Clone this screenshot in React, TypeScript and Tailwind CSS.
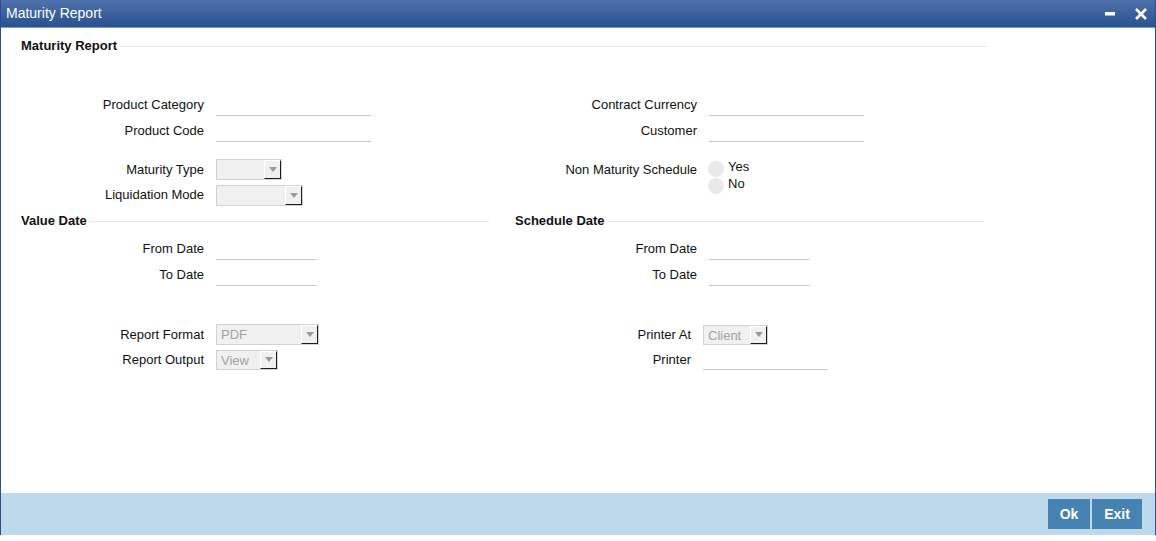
import React from "react";

const Label = ({ text, w = "w-[215px]" }: { text: string; w?: string }) => (
  <span className={`${w} shrink-0 text-right pr-[12px] text-[13px] text-[#111]`}>{text}</span>
);

const TextField = ({ w }: { w: string }) => (
  <div className={`${w} h-[21px] border-b border-[#cbcbcb] bg-white`}></div>
);

const Select = ({ w, value, h = "h-[21px]" }: { w: string; value?: string; h?: string }) => (
  <div className={`${w} ${h} flex border border-[#d2d2d2] bg-[#f0f0f0]`}>
    <span className="flex-1 pl-[4px] text-[13px] leading-[19px] text-[#a3a3a3]">{value}</span>
    <span className="w-[17px] h-full flex items-center justify-center border-t border-l border-t-white border-l-white border-r border-b border-r-[#1e1e1e] border-b-[#1e1e1e] bg-[#f0f0f0]">
      <svg width="8" height="5" viewBox="0 0 8 5">
        <path d="M0 0 H8 L4 5 Z" fill="#9a9a9a" />
      </svg>
    </span>
  </div>
);

const SectionHead = ({ text, className }: { text: string; className: string }) => (
  <div className={`flex items-center h-[20px] ${className}`}>
    <span className="text-[13px] font-bold text-[#111] pr-[2px]">{text}</span>
    <div className="flex-1 h-px bg-[#e8e8e8]"></div>
  </div>
);

const Radio = ({ text }: { text: string }) => (
  <div className="flex items-center h-[17px] gap-[4px]">
    <span className="w-[16px] h-[16px] rounded-full bg-[#e9e9e9]"></span>
    <span className="text-[13px] text-[#111] leading-[14px] -mt-[3px]">{text}</span>
  </div>
);

export default function App() {
  return (
    <div className="w-[1156px] h-[541px] bg-white font-['Liberation_Sans',Arial,sans-serif] overflow-hidden">
      <div className="h-[535px] flex flex-col border-x border-[#2b4f8d]">
        {/* title bar */}
        <div className="h-[28px] shrink-0 flex items-center justify-between pl-[5px] pr-[8px] bg-gradient-to-b from-[#4d72ab] to-[#2b508f] border-b border-[#7d9bc2]">
          <span className="text-[14px] text-white">Maturity Report</span>
          <div className="flex items-center gap-[20px]">
            <svg width="10" height="4" viewBox="0 0 10 4">
              <rect x="0" y="0" width="10" height="3.5" fill="#fff" />
            </svg>
            <svg width="12" height="12" viewBox="0 0 12 12">
              <path d="M1 1 L11 11 M11 1 L1 11" stroke="#fff" strokeWidth="2.6" />
            </svg>
          </div>
        </div>

        {/* body */}
        <div className="flex-1">
          <SectionHead text="Maturity Report" className="mt-[8px] ml-[20px] w-[966px]" />

          <div className="flex mt-[36px]">
            <div className="w-[489px] flex flex-col">
              <div className="flex items-center h-[26px]">
                <Label text="Product Category" />
                <TextField w="w-[155px]" />
              </div>
              <div className="flex items-center h-[26px]">
                <Label text="Product Code" />
                <TextField w="w-[155px]" />
              </div>
            </div>
            <div className="flex flex-col">
              <div className="flex items-center h-[26px]">
                <Label text="Contract Currency" w="w-[219px]" />
                <TextField w="w-[155px]" />
              </div>
              <div className="flex items-center h-[26px]">
                <Label text="Customer" w="w-[219px]" />
                <TextField w="w-[155px]" />
              </div>
            </div>
          </div>

          <div className="flex mt-[13px]">
            <div className="w-[489px] flex flex-col">
              <div className="flex items-center h-[25px]">
                <Label text="Maturity Type" />
                <Select w="w-[66px]" />
              </div>
              <div className="flex items-center h-[26px]">
                <Label text="Liquidation Mode" />
                <Select w="w-[87px]" />
              </div>
            </div>
            <div className="flex items-start">
              <div className="flex items-center h-[25px]">
                <Label text="Non Maturity Schedule" w="w-[219px]" />
              </div>
              <div className="flex flex-col mt-[3px] -ml-[1px]">
                <Radio text="Yes" />
                <Radio text="No" />
              </div>
            </div>
          </div>

          <div className="flex mt-[3px]">
            <SectionHead text="Value Date" className="w-[489px] pl-[20px] pr-[1px]" />
            <SectionHead text="Schedule Date" className="w-[494px] pl-[25px]" />
          </div>

          <div className="flex mt-[5px]">
            <div className="w-[489px] flex flex-col">
              <div className="flex items-center h-[26px]">
                <Label text="From Date" />
                <TextField w="w-[101px]" />
              </div>
              <div className="flex items-center h-[26px]">
                <Label text="To Date" />
                <TextField w="w-[101px]" />
              </div>
            </div>
            <div className="flex flex-col">
              <div className="flex items-center h-[26px]">
                <Label text="From Date" w="w-[219px]" />
                <TextField w="w-[101px]" />
              </div>
              <div className="flex items-center h-[26px]">
                <Label text="To Date" w="w-[219px]" />
                <TextField w="w-[101px]" />
              </div>
            </div>
          </div>

          <div className="flex mt-[34px]">
            <div className="w-[489px] flex flex-col">
              <div className="flex items-center h-[25px]">
                <Label text="Report Format" />
                <Select w="w-[103px]" value="PDF" />
              </div>
              <div className="flex items-center h-[25px]">
                <Label text="Report Output" />
                <Select w="w-[62px]" value="View" h="h-[20px]" />
              </div>
            </div>
            <div className="flex flex-col">
              <div className="flex items-center h-[25px]">
                <Label text="Printer At" w="w-[213px]" />
                <Select w="w-[65px]" value="Client" h="h-[20px]" />
              </div>
              <div className="flex items-center h-[25px]">
                <Label text="Printer" w="w-[213px]" />
                <TextField w="w-[125px]" />
              </div>
            </div>
          </div>
        </div>

        {/* footer */}
        <div className="h-[42px] shrink-0 flex items-center justify-end gap-[2px] pr-[13px] bg-[#bfd9ec]">
          <button className="w-[42px] h-[30px] bg-[#4682b2] text-white text-[14px] font-bold">Ok</button>
          <button className="w-[50px] h-[30px] bg-[#4682b2] text-white text-[14px] font-bold">Exit</button>
        </div>
      </div>
    </div>
  );
}
